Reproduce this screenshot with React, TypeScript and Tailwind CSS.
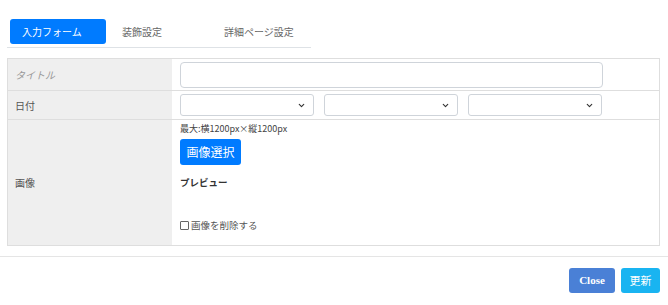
import { ChevronDown } from 'lucide-react';

const font = { fontFamily: '"Noto Sans CJK JP", "Noto Sans", sans-serif' };

function Select() {
  return (
    <div className="relative h-[22px] w-[134px] rounded-[3px] border border-[#cfd4da] bg-white">
      <ChevronDown className="absolute right-[7px] top-[6px] h-[9px] w-[9px] text-[#333]" strokeWidth={3} />
    </div>
  );
}

export default function App() {
  return (
    <div className="h-[305px] w-[668px] bg-white text-[#333]" style={font}>
      {/* Tabs */}
      <div className="pt-[19px]">
        <div className="ml-[7px] flex w-[304px] border-b border-[#dee2e6] pb-[3px] pl-[3px] text-[10px]">
          <div className="flex h-[25px] w-[96px] items-center rounded-[3px] bg-[#007bff] pl-3 text-white">入力フォーム</div>
          <div className="flex h-[25px] w-[102px] items-center pl-4 text-[#666]">装飾設定</div>
          <div className="flex h-[25px] items-center pl-4 text-[#666]">詳細ページ設定</div>
        </div>
      </div>

      {/* Form table */}
      <div className="ml-[7px] mt-[10px] w-[653px] border border-[#dedede] text-[10px]">
        <div className="flex h-[32px] border-b border-[#dedede]">
          <div className="flex w-[164px] items-center bg-[#efefef] pl-[7px] italic text-[#999]">タイトル</div>
          <div className="flex flex-1 items-center pl-[8px]">
            <div className="h-[26px] w-[423px] rounded-[4px] border border-[#cfd4da]" />
          </div>
        </div>
        <div className="flex h-[29px] border-b border-[#dedede]">
          <div className="flex w-[164px] items-center bg-[#efefef] pl-[7px] text-[#555]">日付</div>
          <div className="flex flex-1 items-center gap-[10px] pl-[8px]">
            <Select />
            <Select />
            <Select />
          </div>
        </div>
        <div className="flex h-[125px]">
          <div className="flex w-[164px] items-center bg-[#efefef] pl-[7px] text-[#555]">画像</div>
          <div className="flex flex-1 flex-col items-start pl-[8px] pt-[2px]">
            <div className="text-[9px] leading-[14px] text-[#444]">最大:横1200px×縦1200px</div>
            <button className="mt-[3px] h-[26px] w-[61px] rounded-[3px] bg-[#007bff] text-[12px] text-white">画像選択</button>
            <div className="mt-[10px] text-[9.5px] font-bold leading-[14px] text-[#333]">プレビュー</div>
            <label className="mt-[29px] flex items-center gap-[2px] text-[9.5px] leading-[14px] text-[#555]">
              <span className="inline-block h-[9px] w-[9px] rounded-[1px] border border-[#666]" />
              画像を削除する
            </label>
          </div>
        </div>
      </div>

      {/* Footer */}
      <div className="mt-[10px] border-t border-[#e5e5e5]">
        <div className="flex justify-end gap-[6px] pr-[8px] pt-[11px]">
          <button className="h-[25px] w-[46px] rounded-[3px] bg-[#4a80d6] text-[11px] font-bold text-white" style={{ fontFamily: '"Liberation Serif", serif' }}>Close</button>
          <button className="h-[25px] w-[39px] rounded-[3px] bg-[#19b4f1] text-[11px] text-white">更新</button>
        </div>
      </div>
    </div>
  );
}
